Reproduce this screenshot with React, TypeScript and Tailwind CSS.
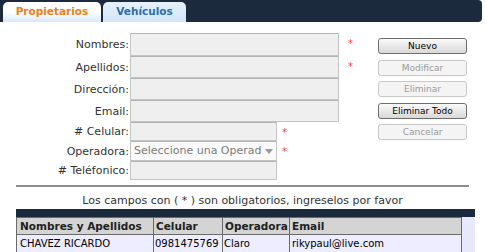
import React from 'react';

const fields = [
  { label: 'Nombres:', width: 'w-[209px]', rowH: 'h-[23px]', star: 'ml-[9px]', required: true },
  { label: 'Apellidos:', width: 'w-[209px]', rowH: 'h-[22px]', star: 'ml-[9px]', required: true },
  { label: 'Dirección:', width: 'w-[209px]', rowH: 'h-[22px]', star: 'ml-[9px]', required: false },
  { label: 'Email:', width: 'w-[209px]', rowH: 'h-[22px]', star: 'ml-[9px]', required: false },
  { label: '# Celular:', width: 'w-[147px]', rowH: 'h-[19px]', star: 'ml-[5px]', required: true },
  { label: 'Operadora:', width: 'w-[147px]', rowH: 'h-[20px]', star: 'ml-[5px]', required: true, select: true },
  { label: '# Teléfonico:', width: 'w-[147px]', rowH: 'h-[19px]', star: 'ml-[5px]', required: false },
];

const buttons = [
  { text: 'Nuevo', enabled: true },
  { text: 'Modificar', enabled: false },
  { text: 'Eliminar', enabled: false },
  { text: 'Eliminar Todo', enabled: true },
  { text: 'Cancelar', enabled: false },
];

const rows = [
  { nombre: 'CHAVEZ RICARDO', celular: '0981475769', operadora: 'Claro', email: 'rikypaul@live.com' },
];

export default function App() {
  return (
    <div className="w-[485px] h-[252px] overflow-hidden bg-white font-['DejaVu_Sans',sans-serif] text-[#333]">
      {/* Tabs */}
      <div className="mr-[3px] h-[22px] bg-[#1b2a3c] rounded-r-[4px] flex items-end pl-[3px] gap-[2px]">
        <div className="w-[98px] h-[20px] rounded-t-[5px] bg-gradient-to-b from-white via-white to-[#d6e8f8] flex items-center justify-center text-[10.5px] font-bold text-[#e8801c]">
          Propietarios
        </div>
        <div className="w-[83px] h-[20px] rounded-t-[5px] bg-gradient-to-b from-[#e6f1fb] to-[#d2e6f8] flex items-center justify-center text-[10.5px] font-bold text-[#2f6ea8]">
          Vehículos
        </div>
      </div>

      {/* Form */}
      <div className="mt-[11px] flex">
        <div className="flex flex-col">
          {fields.map((f) => (
            <div key={f.label} className={`flex items-start ${f.rowH}`}>
              <div className="w-[130px] pr-px text-right text-[11px] leading-[13px] self-center">{f.label}</div>
              <div
                className={`${f.width} h-full border border-[#c4c4c4] border-t-[#b4b4b4] ${f.select ? 'bg-[#fbfbfb]' : 'bg-[#efefef]'} flex items-center pl-[3px] pr-[4px] overflow-hidden rounded-[1px] mb-px`}
              >
                {f.select && (
                  <>
                    <span className="text-[11px] text-[#7a7a7a] whitespace-nowrap flex-1">Seleccione una Operad</span>
                    <svg width="8" height="5" viewBox="0 0 8 5" className="ml-[3px] shrink-0">
                      <path d="M0 0h8L4 5z" fill="#9a9a9a" />
                    </svg>
                  </>
                )}
              </div>
              {f.required && (
                <span className={`${f.star} mt-[6px] text-[10px] leading-[10px] text-[#ff3b3b]`}>*</span>
              )}
            </div>
          ))}
        </div>

        <div className="ml-auto mr-[18px] mt-[5px] flex flex-col gap-[5.5px]">
          {buttons.map((b) => (
            <div
              key={b.text}
              className={`w-[89px] h-[16px] rounded-[3px] flex items-center justify-center text-[9px] leading-[10px] ${
                b.enabled
                  ? 'border border-[#6e6e6e] bg-gradient-to-b from-[#fafafa] to-[#d8d8d8] text-black'
                  : 'border border-[#c8c8c8] bg-[#f4f4f4] text-[#9a9a9a]'
              }`}
            >
              {b.text}
            </div>
          ))}
        </div>
      </div>

      {/* Separator */}
      <div className="mx-[16px] mt-[5px] h-[2px] bg-[#8c8c8c]" />

      <p className="mt-[7px] text-center text-[11px] leading-[13px] text-[#333]">
        Los campos con ( * ) son obligatorios, ingreselos por favor
      </p>

      {/* Table */}
      <div className="mx-[16px] mt-[2px] w-[459px] bg-[#e8e8fd]">
        <div className="h-[8px] bg-[#1b2a3c]" />
        <table className="border-collapse text-[10px] leading-[12px] text-black">
          <thead>
            <tr className="h-[17px] bg-[#d4d4d4] text-[10.5px]">
              <th className="w-[137px] border border-[#6a6a6a] pl-[3px] text-left font-bold text-[#222]">Nombres y Apellidos</th>
              <th className="w-[69px] border border-[#6a6a6a] pl-[2px] text-left font-bold text-[#222]">Celular</th>
              <th className="w-[67px] border border-[#6a6a6a] pl-[2px] text-left font-bold text-[#222]">Operadora</th>
              <th className="w-[172px] border border-[#6a6a6a] pl-[2px] text-left font-bold text-[#222]">Email</th>
            </tr>
          </thead>
          <tbody>
            {rows.map((r) => (
              <tr key={r.email} className="h-[18px] bg-[#ededff]">
                <td className="border border-[#6a6a6a] pl-[3px]">{r.nombre}</td>
                <td className="border border-[#6a6a6a] pl-[1px]">{r.celular}</td>
                <td className="border border-[#6a6a6a] pl-[1px]">{r.operadora}</td>
                <td className="border border-[#6a6a6a] pl-[2px]">{r.email}</td>
              </tr>
            ))}
            <tr className="h-[18px] bg-[#ededff]">
              <td className="border border-[#6a6a6a]" />
              <td className="border border-[#6a6a6a]" />
              <td className="border border-[#6a6a6a]" />
              <td className="border border-[#6a6a6a]" />
            </tr>
          </tbody>
        </table>
      </div>
    </div>
  );
}
